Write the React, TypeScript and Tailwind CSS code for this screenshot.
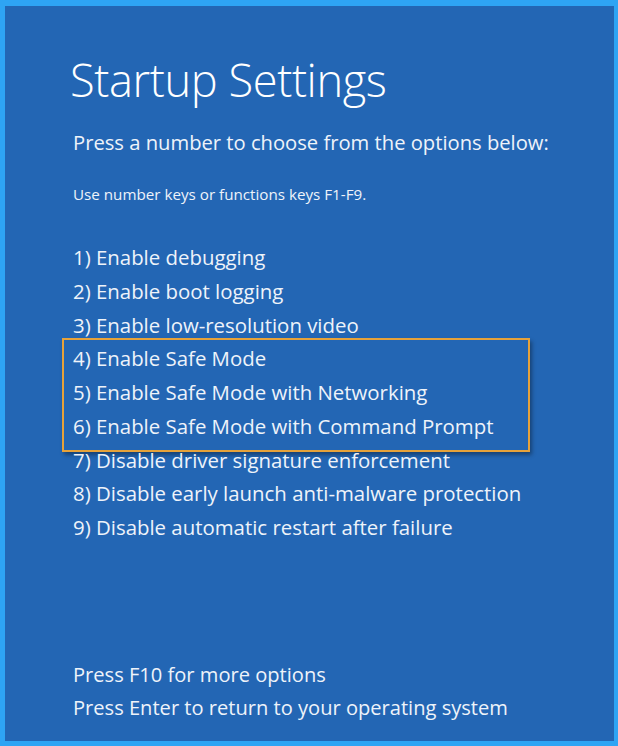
const options = [
  "1) Enable debugging",
  "2) Enable boot logging",
  "3) Enable low-resolution video",
  "4) Enable Safe Mode",
  "5) Enable Safe Mode with Networking",
  "6) Enable Safe Mode with Command Prompt",
  "7) Disable driver signature enforcement",
  "8) Disable early launch anti-malware protection",
  "9) Disable automatic restart after failure",
];

function Line({ text }: { text: string }) {
  return <div className="h-[33.75px] leading-[33.75px] whitespace-nowrap">{text}</div>;
}

export default function App() {
  return (
    <div
      className="w-[618px] h-[746px] bg-[#2ea4f4] pt-[6px] pl-[5px] pr-[4px] pb-[5px]"
      style={{ fontFamily: '"Open Sans", "Noto Sans", sans-serif' }}
    >
      <div className="h-full bg-[#2366b4] text-[#eef3fa] pl-[68px] flex flex-col">
        <h1 className="mt-[46px] -ml-[3px] text-[45.2px] font-light leading-[56px] tracking-[-0.4px] text-white">
          Startup Settings
        </h1>
        <p className="mt-[20px] text-[20.2px] leading-[28px]">
          Press a number to choose from the options below:
        </p>
        <p className="mt-[28px] text-[15.2px] leading-[20px]">
          Use number keys or functions keys F1-F9.
        </p>

        <div className="mt-[37px] text-[20.4px]">
          {options.slice(0, 3).map((o) => (
            <Line key={o} text={o} />
          ))}
          <div className="-ml-[11px] w-[468px] border-2 border-[#e6a23a] pl-[9px] pt-[2px] pb-[6px] -mt-[4px] -mb-[8px] shadow-[2px_3px_4px_rgba(0,0,0,0.35)]">
            {options.slice(3, 6).map((o) => (
              <Line key={o} text={o} />
            ))}
          </div>
          {options.slice(6).map((o) => (
            <Line key={o} text={o} />
          ))}
        </div>

        <div className="mt-auto mb-[16px] text-[20.1px]">
          <Line text="Press F10 for more options" />
          <Line text="Press Enter to return to your operating system" />
        </div>
      </div>
    </div>
  );
}
